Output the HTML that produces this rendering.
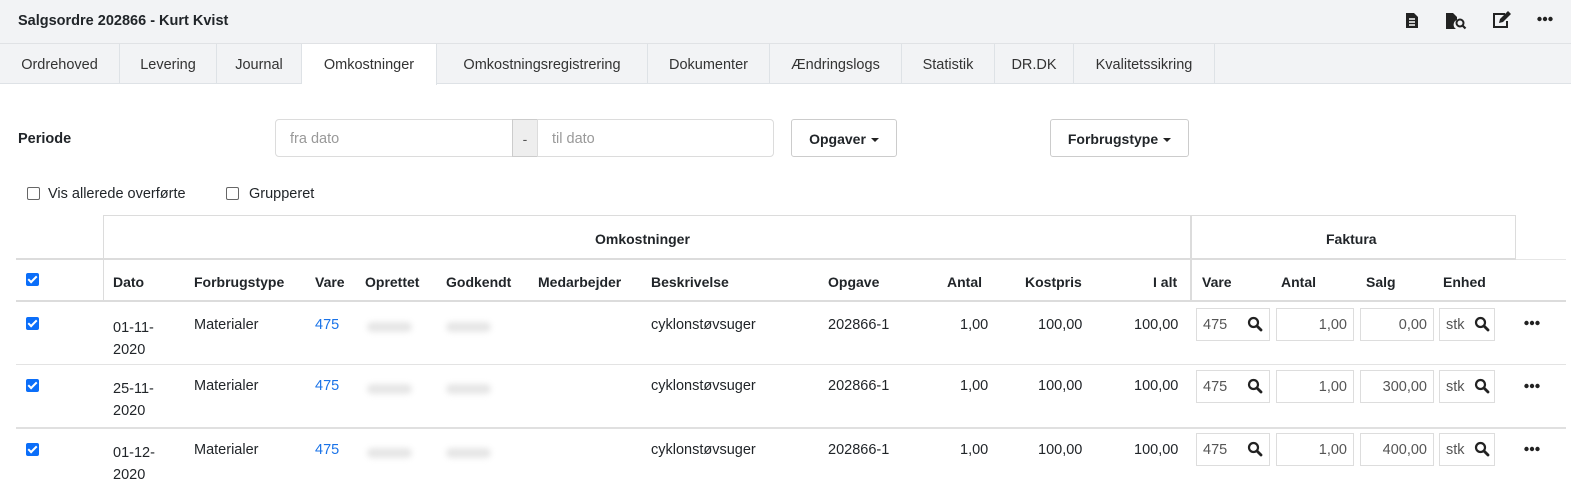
<!DOCTYPE html>
<html><head><meta charset="utf-8"><style>
*{box-sizing:border-box;margin:0;padding:0}
body{width:1571px;height:490px;overflow:hidden;background:#fff;font-family:"Liberation Sans",sans-serif;font-size:14px;color:#212529;position:relative}
.a{position:absolute;white-space:nowrap}
.hdr{left:0;top:0;width:1571px;height:44px;background:#f2f3f5;border-bottom:1px solid #e0e2e5}
.tabs{left:0;top:44px;width:1571px;height:40px;background:#f2f3f5;border-bottom:1px solid #dee2e6}
.tab{position:absolute;top:0;height:40px;border-right:1px solid #dee2e6;line-height:42px;text-align:center;color:#333;font-size:14.5px}
.tab.act{background:#fff;height:41px}
.b{font-weight:bold}
.inp{position:absolute;border:1px solid #dcdcdc;background:#fff;color:#999;line-height:38px;padding-left:14px;font-size:14.5px}
.btn{position:absolute;border:1px solid #ccc;border-radius:3px;background:#fff;font-weight:bold;text-align:center;line-height:38px;font-size:14px}
.car{display:inline-block;width:0;height:0;border-left:4px solid transparent;border-right:4px solid transparent;border-top:4px solid #222;vertical-align:middle;margin-left:5px}
.cb{position:absolute;width:13px;height:13px;border:1px solid #666;border-radius:2px;background:#fff}
.cbc{position:absolute;width:13px;height:13px;border-radius:2px;background:#0b6ef9}
.cbc:after{content:"";position:absolute;left:4px;top:1px;width:3px;height:7px;border:solid #fff;border-width:0 2px 2px 0;transform:rotate(45deg)}
.hl{position:absolute;background:#dcdcdc}
.fi{position:absolute;border:1px solid #ddd;height:33px;line-height:33px;font-size:14.5px;color:#555;padding:0 6px}
.r{text-align:right}
.blur{position:absolute;height:10px;background:#e6e6e6;border-radius:5px;filter:blur(3px)}
.t{font-size:14.5px}
</style></head><body>
<div class="a hdr"></div>
<div class="a b" style="left:18px;top:13px;font-size:14.5px">Salgsordre 202866 - Kurt Kvist</div>
<svg class="a" style="left:1405px;top:12px" width="14" height="17" viewBox="0 0 14 17"><path d="M1 1h8l4 4v11H1z" fill="#222"/><path d="M4 7h6M4 10h6M4 13h6" stroke="#fff" stroke-width="1.4"/></svg>
<svg class="a" style="left:1446px;top:12px" width="22" height="18" viewBox="0 0 22 18"><path d="M0 1h7l4 4v3a5 5 0 0 0-1 9H0z" fill="#222"/><circle cx="14" cy="11" r="3.5" fill="none" stroke="#222" stroke-width="2"/><path d="M16.5 13.5l3 3" stroke="#222" stroke-width="2.2"/></svg>
<svg class="a" style="left:1492px;top:11px" width="20" height="18" viewBox="0 0 20 18"><path d="M13 3H2v13h13v-6" fill="none" stroke="#222" stroke-width="2"/><path d="M7 12l1-4 8-8 3 3-8 8z" fill="#222"/></svg>
<svg class="a" style="left:1537px;top:16px" width="16" height="6" viewBox="0 0 16 6"><circle cx="2.5" cy="3" r="2.2" fill="#222"/><circle cx="8" cy="3" r="2.2" fill="#222"/><circle cx="13.5" cy="3" r="2.2" fill="#222"/></svg>
<div class="a tabs">
<div class="tab" style="left:0;width:120px">Ordrehoved</div>
<div class="tab" style="left:120px;width:97px">Levering</div>
<div class="tab" style="left:217px;width:85px">Journal</div>
<div class="tab act" style="left:302px;width:135px">Omkostninger</div>
<div class="tab" style="left:437px;width:211px">Omkostningsregistrering</div>
<div class="tab" style="left:648px;width:122px">Dokumenter</div>
<div class="tab" style="left:770px;width:132px">Ændringslogs</div>
<div class="tab" style="left:902px;width:93px">Statistik</div>
<div class="tab" style="left:995px;width:79px">DR.DK</div>
<div class="tab" style="left:1074px;width:141px">Kvalitetssikring</div>
</div>
<div class="a b" style="left:18px;top:131px;font-size:14.5px">Periode</div>
<div class="inp" style="left:275px;top:119px;width:238px;height:38px;border-radius:4px 0 0 4px">fra dato</div>
<div class="a" style="left:512px;top:119px;width:26px;height:38px;background:#eee;border:1px solid #ccc;text-align:center;line-height:38px;color:#555">-</div>
<div class="inp" style="left:537px;top:119px;width:237px;height:38px;border-radius:0 4px 4px 0">til dato</div>
<div class="btn" style="left:791px;top:119px;width:106px;height:38px">Opgaver<span class="car"></span></div>
<div class="btn" style="left:1050px;top:119px;width:139px;height:38px">Forbrugstype<span class="car"></span></div>
<div class="cb" style="left:27px;top:187px"></div><div class="a t" style="left:48px;top:186px">Vis allerede overførte</div>
<div class="cb" style="left:226px;top:187px"></div><div class="a t" style="left:249px;top:186px">Grupperet</div>

<div class="hl" style="left:103px;top:215px;width:1413px;height:1px"></div>
<div class="hl" style="left:103px;top:215px;width:1px;height:86px"></div>
<div class="hl" style="left:1190px;top:215px;width:2px;height:86px"></div>
<div class="hl" style="left:1515px;top:215px;width:1px;height:44px"></div>
<div class="hl" style="left:16px;top:258px;width:1500px;height:2px"></div>
<div class="hl" style="left:1516px;top:259px;width:50px;height:1px;background:#e6e6e6"></div>
<div class="a b" style="left:595px;top:231px">Omkostninger</div>
<div class="a b" style="left:1326px;top:231px">Faktura</div>
<div class="cbc" style="left:26px;top:273px"></div>
<div class="a b" style="top:274px;left:0;width:1571px;height:20px">
<span class="a" style="left:113px">Dato</span><span class="a" style="left:194px">Forbrugstype</span><span class="a" style="left:315px">Vare</span><span class="a" style="left:365px">Oprettet</span><span class="a" style="left:446px">Godkendt</span><span class="a" style="left:538px">Medarbejder</span><span class="a" style="left:651px">Beskrivelse</span><span class="a" style="left:828px">Opgave</span><span class="a" style="left:947px">Antal</span><span class="a" style="left:1025px">Kostpris</span><span class="a" style="left:1153px">I alt</span><span class="a" style="left:1202px">Vare</span><span class="a" style="left:1281px">Antal</span><span class="a" style="left:1366px">Salg</span><span class="a" style="left:1443px">Enhed</span></div>
<div class="hl" style="left:16px;top:300px;width:1550px;height:2px"></div>

<!-- row 1 -->
<div class="cbc" style="left:26px;top:317px"></div>
<div class="a t" style="left:113px;top:317px;line-height:22px">01-11-<br>2020</div>
<div class="a t" style="left:194px;top:317px">Materialer</div>
<div class="a t" style="left:315px;top:317px;color:#1a73e8">475</div>
<div class="blur" style="left:367px;top:322px;width:45px"></div><div class="blur" style="left:446px;top:322px;width:45px"></div>
<div class="a t" style="left:651px;top:317px">cyklonstøvsuger</div>
<div class="a t" style="left:828px;top:317px">202866-1</div>
<div class="a t" style="left:960px;top:317px">1,00</div>
<div class="a t" style="left:1038px;top:317px">100,00</div>
<div class="a t" style="left:1134px;top:317px">100,00</div>
<div class="fi" style="left:1196px;top:308px;width:74px">475</div>
<div class="fi r" style="left:1276px;top:308px;width:78px">1,00</div>
<div class="fi r" style="left:1360px;top:308px;width:74px">0,00</div>
<div class="fi" style="left:1439px;top:308px;width:56px">stk</div>
<div class="hl" style="left:16px;top:364px;width:1550px;height:1px;background:#e3e3e3"></div>
<!-- row 2 -->
<div class="cbc" style="left:26px;top:379px"></div>
<div class="a t" style="left:113px;top:378px;line-height:22px">25-11-<br>2020</div>
<div class="a t" style="left:194px;top:378px">Materialer</div>
<div class="a t" style="left:315px;top:378px;color:#1a73e8">475</div>
<div class="blur" style="left:367px;top:384px;width:45px"></div><div class="blur" style="left:446px;top:384px;width:45px"></div>
<div class="a t" style="left:651px;top:378px">cyklonstøvsuger</div>
<div class="a t" style="left:828px;top:378px">202866-1</div>
<div class="a t" style="left:960px;top:378px">1,00</div>
<div class="a t" style="left:1038px;top:378px">100,00</div>
<div class="a t" style="left:1134px;top:378px">100,00</div>
<div class="fi" style="left:1196px;top:370px;width:74px">475</div>
<div class="fi r" style="left:1276px;top:370px;width:78px">1,00</div>
<div class="fi r" style="left:1360px;top:370px;width:74px">300,00</div>
<div class="fi" style="left:1439px;top:370px;width:56px">stk</div>
<div class="hl" style="left:16px;top:427px;width:1550px;height:2px;background:#e0e0e0"></div>
<!-- row 3 -->
<div class="cbc" style="left:26px;top:443px"></div>
<div class="a t" style="left:113px;top:442px;line-height:22px">01-12-<br>2020</div>
<div class="a t" style="left:194px;top:442px">Materialer</div>
<div class="a t" style="left:315px;top:442px;color:#1a73e8">475</div>
<div class="blur" style="left:367px;top:448px;width:45px"></div><div class="blur" style="left:446px;top:448px;width:45px"></div>
<div class="a t" style="left:651px;top:442px">cyklonstøvsuger</div>
<div class="a t" style="left:828px;top:442px">202866-1</div>
<div class="a t" style="left:960px;top:442px">1,00</div>
<div class="a t" style="left:1038px;top:442px">100,00</div>
<div class="a t" style="left:1134px;top:442px">100,00</div>
<div class="fi" style="left:1196px;top:433px;width:74px">475</div>
<div class="fi r" style="left:1276px;top:433px;width:78px">1,00</div>
<div class="fi r" style="left:1360px;top:433px;width:74px">400,00</div>
<div class="fi" style="left:1439px;top:433px;width:56px">stk</div>

<svg class="a" style="left:1524px;top:320px" width="16" height="6" viewBox="0 0 16 6"><circle cx="2.5" cy="3" r="2.2" fill="#222"/><circle cx="8" cy="3" r="2.2" fill="#222"/><circle cx="13.5" cy="3" r="2.2" fill="#222"/></svg>
<svg class="a" style="left:1524px;top:383px" width="16" height="6" viewBox="0 0 16 6"><circle cx="2.5" cy="3" r="2.2" fill="#222"/><circle cx="8" cy="3" r="2.2" fill="#222"/><circle cx="13.5" cy="3" r="2.2" fill="#222"/></svg>
<svg class="a" style="left:1524px;top:446px" width="16" height="6" viewBox="0 0 16 6"><circle cx="2.5" cy="3" r="2.2" fill="#222"/><circle cx="8" cy="3" r="2.2" fill="#222"/><circle cx="13.5" cy="3" r="2.2" fill="#222"/></svg>

<svg class="a" style="left:1247px;top:316px" width="16" height="16" viewBox="0 0 16 16"><circle cx="6.5" cy="6.5" r="4.5" fill="none" stroke="#222" stroke-width="2.2"/><path d="M10 10l4 4" stroke="#222" stroke-width="2.8" stroke-linecap="round"/></svg>
<svg class="a" style="left:1474px;top:316px" width="16" height="16" viewBox="0 0 16 16"><circle cx="6.5" cy="6.5" r="4.5" fill="none" stroke="#222" stroke-width="2.2"/><path d="M10 10l4 4" stroke="#222" stroke-width="2.8" stroke-linecap="round"/></svg>
<svg class="a" style="left:1247px;top:378px" width="16" height="16" viewBox="0 0 16 16"><circle cx="6.5" cy="6.5" r="4.5" fill="none" stroke="#222" stroke-width="2.2"/><path d="M10 10l4 4" stroke="#222" stroke-width="2.8" stroke-linecap="round"/></svg>
<svg class="a" style="left:1474px;top:378px" width="16" height="16" viewBox="0 0 16 16"><circle cx="6.5" cy="6.5" r="4.5" fill="none" stroke="#222" stroke-width="2.2"/><path d="M10 10l4 4" stroke="#222" stroke-width="2.8" stroke-linecap="round"/></svg>
<svg class="a" style="left:1247px;top:441px" width="16" height="16" viewBox="0 0 16 16"><circle cx="6.5" cy="6.5" r="4.5" fill="none" stroke="#222" stroke-width="2.2"/><path d="M10 10l4 4" stroke="#222" stroke-width="2.8" stroke-linecap="round"/></svg>
<svg class="a" style="left:1474px;top:441px" width="16" height="16" viewBox="0 0 16 16"><circle cx="6.5" cy="6.5" r="4.5" fill="none" stroke="#222" stroke-width="2.2"/><path d="M10 10l4 4" stroke="#222" stroke-width="2.8" stroke-linecap="round"/></svg>
</body></html>
